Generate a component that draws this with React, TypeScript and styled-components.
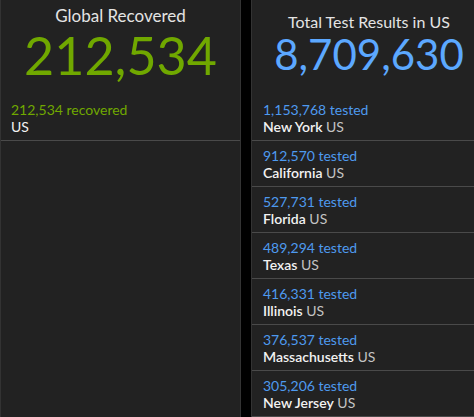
import styled, { createGlobalStyle } from "styled-components";

const GlobalStyle = createGlobalStyle`
  html, body {
    margin: 0;
    padding: 0;
    background: #000;
    overflow: hidden;
  }
  * { box-sizing: border-box; }
`;

const Board = styled.div`
  display: grid;
  grid-template-columns: 241px 236px;
  column-gap: 10px;
  height: 417px;
  width: 487px;
  background: #000;
  font-family: "Lato", "Open Sans", sans-serif;
`;

const Panel = styled.div`
  display: flex;
  flex-direction: column;
  background: #222222;
  border-left: 1px solid #333;
  border-right: 1px solid #333;
  overflow: hidden;
`;

const Header = styled.div<{ $top: number }>`
  flex-shrink: 0;
  height: 95px;
  padding-top: ${({ $top }) => $top}px;
  display: flex;
  flex-direction: column;
  align-items: center;
`;

const Title = styled.div<{ $size: number }>`
  color: #e4e4e4;
  font-size: ${({ $size }) => $size}px;
  line-height: 1.2;
  white-space: nowrap;
`;

const BigNumber = styled.div<{ $size: number; $color: string; $gap: number }>`
  color: ${({ $color }) => $color};
  font-size: ${({ $size }) => $size}px;
  line-height: 1;
  margin-top: ${({ $gap }) => $gap}px;
  white-space: nowrap;
`;

const List = styled.div`
  flex-shrink: 0;
  display: flex;
  flex-direction: column;
`;

const Item = styled.div<{ $left?: number }>`
  padding: 6px 10px 5px ${({ $left }) => $left ?? 11}px;
  border-bottom: 1px solid #4a4a4a;
  font-size: 14px;
  line-height: 17px;
  white-space: nowrap;
`;

const Value = styled.div<{ $color: string }>`
  color: ${({ $color }) => $color};
`;

const Name = styled.div`
  color: #f2f2f2;
`;

const Strong = styled.span`
  font-weight: 600;
`;

const Country = styled.span`
  color: #c4c4c4;
`;

const GREEN = "#70a800";
const BLUE = "#5ca8ff";
const SMALL_BLUE = "#4e9aef";

const tests = [
  { n: "1,153,768", s: "New York" },
  { n: "912,570", s: "California" },
  { n: "527,731", s: "Florida" },
  { n: "489,294", s: "Texas" },
  { n: "416,331", s: "Illinois" },
  { n: "376,537", s: "Massachusetts" },
  { n: "305,206", s: "New Jersey" },
];

export default function App() {
  return (
    <>
      <GlobalStyle />
      <Board>
        <Panel>
          <Header $top={6}>
            <Title $size={17}>Global Recovered</Title>
            <BigNumber $size={52} $color={GREEN} $gap={3}>
              212,534
            </BigNumber>
          </Header>
          <List>
            <Item $left={10}>
              <Value $color={GREEN}>212,534 recovered</Value>
              <Name>US</Name>
            </Item>
          </List>
        </Panel>
        <Panel>
          <Header $top={12}>
            <Title $size={16}>Total Test Results in US</Title>
            <BigNumber $size={42} $color={BLUE} $gap={2}>
              8,709,630
            </BigNumber>
          </Header>
          <List>
            {tests.map((t) => (
              <Item key={t.s}>
                <Value $color={SMALL_BLUE}>{t.n} tested</Value>
                <Name>
                  <Strong>{t.s}</Strong> <Country>US</Country>
                </Name>
              </Item>
            ))}
          </List>
        </Panel>
      </Board>
    </>
  );
}
